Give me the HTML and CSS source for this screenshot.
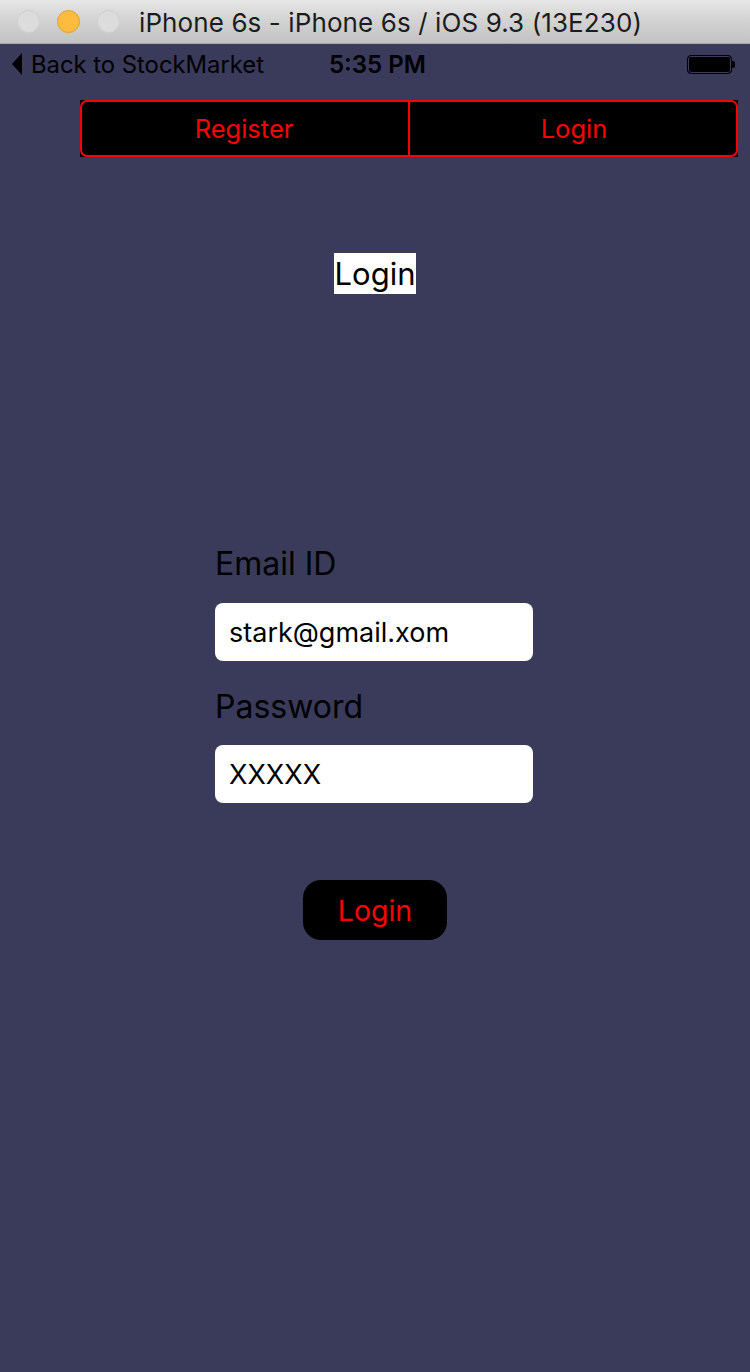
FILE: index.html
```html
<!DOCTYPE html>
<html>
<head>
<meta charset="utf-8">
<link rel="stylesheet" href="styles.css">
</head>
<body>
<div class="window">
  <div class="titlebar">
    <div class="lights">
      <span class="light grey"></span>
      <span class="light yellow"></span>
      <span class="light grey"></span>
    </div>
    <div class="title">iPhone 6s - iPhone 6s / iOS 9.3 (13E230)</div>
  </div>
  <div class="screen">
    <div class="statusbar">
      <div class="back"><span class="tri"></span>Back to StockMarket</div>
      <div class="time">5:35 PM</div>
      <div class="battery"><span class="cell"></span><span class="nub"></span></div>
    </div>
    <div class="segwrap">
      <div class="segment">
        <div class="seg">Register</div>
        <div class="seg">Login</div>
      </div>
    </div>
    <div class="heading"><span class="headbox">Login</span></div>
    <div class="form">
      <div class="label">Email ID</div>
      <div class="field">stark@gmail.xom</div>
      <div class="label pw">Password</div>
      <div class="field">XXXXX</div>
    </div>
    <div class="btnrow"><div class="btn">Login</div></div>
  </div>
</div>
</body>
</html>
```
FILE: styles.css
```css
* { box-sizing: border-box; }
html, body { margin: 0; padding: 0; }
body {
  width: 750px;
  height: 1372px;
  overflow: hidden;
  font-family: Inter, "Noto Sans", "Liberation Sans", sans-serif;
  background: #3a3a5a;
}
.window { width: 750px; height: 1372px; display: flex; flex-direction: column; }
.titlebar {
  height: 44px;
  background: linear-gradient(#e6e6e6, #d2d2d2 50%, #c2c2c2);
  border-bottom: 1px solid #a8a8a8;
  display: flex;
  align-items: center;
  flex-shrink: 0;
}
.lights { display: flex; gap: 17px; padding-left: 17px; width: 139px; }
.light { width: 23px; height: 23px; border-radius: 50%; display: block; }
.light.grey { background: #dcdcdc; border: 1px solid #cfcfcf; }
.light.yellow { background: #fdbc40; border: 1px solid #e0a030; }
.title {
  font-size: 26px;
  color: #1c1c1c;
  letter-spacing: 0.1px;
  padding-top: 1px;
}
.screen { flex: 1; background: #3a3a5a; display: flex; flex-direction: column; }
.statusbar {
  height: 44px;
  display: flex;
  align-items: center;
  padding-bottom: 4px;
  color: #000;
}
.back {
  display: flex;
  align-items: center;
  font-size: 23.8px;
  padding-left: 12px;
  width: 329px;
}
.tri {
  width: 0; height: 0;
  border-top: 11px solid transparent;
  border-bottom: 11px solid transparent;
  border-right: 10px solid #000;
  margin-right: 9px;
}
.time { font-size: 24px; font-weight: 600; flex: 1; }
.battery { display: flex; align-items: center; margin-right: 15px; }
.cell {
  width: 45px; height: 19px;
  border: 1.5px solid #000;
  border-radius: 4px;
  background: #000;
  box-shadow: inset 0 0 0 1px #3a3a5a;
}
.nub { width: 3px; height: 7px; background: #000; border-radius: 0 2px 2px 0; }
.segwrap { padding: 12px 12px 0 80px; }
.segment {
  height: 57px;
  background: #000;
  display: flex;
  position: relative;
}
.segment::before {
  content: "";
  position: absolute;
  inset: 0;
  border: 2px solid #ff0000;
  border-radius: 7px;
  pointer-events: none;
}
.seg {
  flex: 1;
  display: flex;
  align-items: center;
  justify-content: center;
  color: #ff0000;
  font-size: 25.5px;
}
.seg + .seg { border-left: 2px solid #ff0000; }
.heading { display: flex; justify-content: center; padding-top: 96px; }
.headbox {
  background: #fff;
  color: #000;
  font-size: 31px;
  line-height: 41px;
  height: 41px;
  padding: 0 1px;
}
.form { padding: 250px 0 0 215px; width: 318px; box-sizing: content-box; }
.label { font-size: 32px; color: #000; line-height: 40px; height: 40px; margin-bottom: 19px; }
.label.pw { margin-top: 26px; margin-bottom: 18px; }
.field {
  height: 58px;
  background: #fff;
  border-radius: 8px;
  color: #000;
  font-size: 27px;
  display: flex;
  align-items: center;
  padding-left: 14px;
}
.btnrow { display: flex; justify-content: center; padding-top: 77px; }
.btn {
  width: 144px;
  height: 60px;
  background: #000;
  border-radius: 18px;
  color: #ff0000;
  font-size: 28.5px;
  display: flex;
  align-items: center;
  justify-content: center;
}
```
